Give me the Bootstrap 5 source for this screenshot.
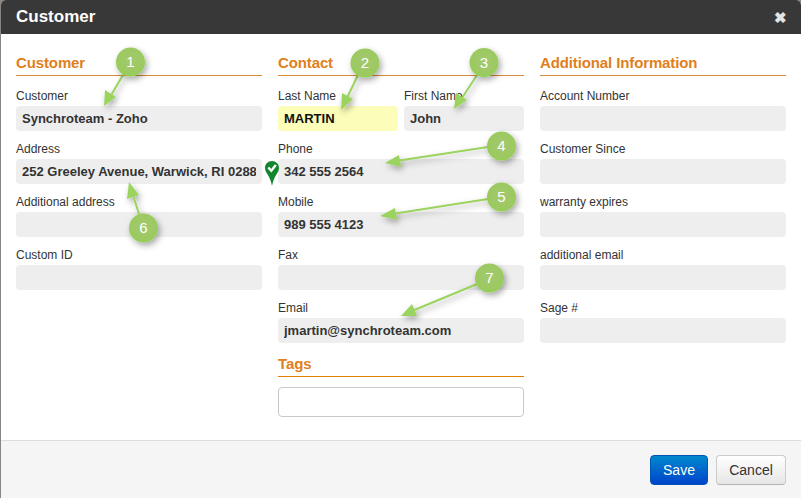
<!DOCTYPE html>
<html lang="en">
<head>
<meta charset="utf-8">
<title>Customer</title>
<link rel="stylesheet" href="https://cdn.jsdelivr.net/npm/bootstrap@5.3.0/dist/css/bootstrap.min.css">
<style>
html,body{height:498px;overflow:hidden;background:#8a8580;font-family:"Liberation Sans",Arial,sans-serif;}
.shot{position:relative;margin-left:1px;width:800px;height:498px;background:#fff;border-radius:5px 5px 0 0;overflow:hidden;}
.dlg-head{height:34px;background:#383838;color:#fff;padding:0 15px;}
.dlg-title{font-size:17px;font-weight:700;margin:0 0 2px;line-height:1;}
.dlg-x{font-size:15px;font-weight:700;color:#e4e4e4;line-height:1;margin-right:-1px;}
.dlg-body{height:406px;padding:20px 15px 0;}
.cols{grid-template-columns:repeat(3,246px);column-gap:16px;}
.sec{font-size:15px;font-weight:700;color:#e07f20;margin:0;height:22px;line-height:18px;letter-spacing:-.12px;border-bottom:1px solid #d98a3c;}
.sec-2{margin-top:11px;border-bottom-color:#e08000;height:23px;line-height:20px;}
.fld{margin-top:13px;height:42px;}
.fld+.fld{margin-top:11px;}
.fld-label{display:block;font-size:12px;line-height:14px;height:17px;margin:0;color:#333;}
.fld-in{display:block;width:100%;height:25px;border:0;border-radius:4px;background:#eee;padding:0 6px;font:700 13px/25px "Liberation Sans",Arial,sans-serif;color:#333;outline:0;}
.fld-in.hl{background:#fbfdb8;color:#111;}
.pair{grid-template-columns:120px 120px;column-gap:6px;}
.tag-in{height:30px;margin-top:10px;border:1px solid #c8c8c8;border-radius:4px;background:#fff;padding:0 6px;box-shadow:none;}
.dlg-foot{height:58px;background:#f5f5f5;border-top:1px solid #ddd;padding:0 15px;}
.bt{height:30px;padding:0;font-size:14px;line-height:28px;border-radius:4px;}
.bt-save{width:58px;color:#fff;border:1px solid #0055b3;background:linear-gradient(#0088cc,#0044cc);}
.bt-cancel{width:70px;color:#333;border:1px solid #ccc;border-bottom-color:#b3b3b3;background:linear-gradient(#fff,#e6e6e6);}
.notes{position:absolute;left:-1px;top:0;width:801px;height:498px;pointer-events:none;}
.notes text{font:400 15px "Liberation Sans",Arial,sans-serif;fill:#fff;text-anchor:middle;}
</style>
</head>
<body>
<div class="shot d-flex flex-column">
  <div class="dlg-head d-flex align-items-center justify-content-between">
    <h5 class="dlg-title">Customer</h5>
    <span class="dlg-x">✖</span>
  </div>
  <div class="dlg-body">
    <div class="d-grid cols">
      <div>
        <h6 class="sec">Customer</h6>
        <div class="fld"><label class="fld-label">Customer</label><input class="fld-in" readonly value="Synchroteam - Zoho"></div>
        <div class="fld"><label class="fld-label">Address</label><input class="fld-in" readonly value="252 Greeley Avenue, Warwick, RI 0288"></div>
        <div class="fld"><label class="fld-label">Additional address</label><input class="fld-in" readonly></div>
        <div class="fld"><label class="fld-label">Custom ID</label><input class="fld-in" readonly></div>
      </div>
      <div>
        <h6 class="sec">Contact</h6>
        <div class="fld d-grid pair">
          <div><label class="fld-label">Last Name</label><input class="fld-in hl" readonly value="MARTIN"></div>
          <div><label class="fld-label">First Name</label><input class="fld-in" readonly value="John"></div>
        </div>
        <div class="fld"><label class="fld-label">Phone</label><input class="fld-in" readonly value="342 555 2564"></div>
        <div class="fld"><label class="fld-label">Mobile</label><input class="fld-in" readonly value="989 555 4123"></div>
        <div class="fld"><label class="fld-label">Fax</label><input class="fld-in" readonly></div>
        <div class="fld"><label class="fld-label">Email</label><input class="fld-in" readonly value="jmartin@synchroteam.com"></div>
        <h6 class="sec sec-2">Tags</h6>
        <input class="fld-in tag-in" readonly>
      </div>
      <div>
        <h6 class="sec">Additional Information</h6>
        <div class="fld"><label class="fld-label">Account Number</label><input class="fld-in" readonly></div>
        <div class="fld"><label class="fld-label">Customer Since</label><input class="fld-in" readonly></div>
        <div class="fld"><label class="fld-label">warranty expires</label><input class="fld-in" readonly></div>
        <div class="fld"><label class="fld-label">additional email</label><input class="fld-in" readonly></div>
        <div class="fld"><label class="fld-label">Sage #</label><input class="fld-in" readonly></div>
      </div>
    </div>
  </div>
  <div class="dlg-foot d-flex align-items-center justify-content-end gap-2">
    <button class="btn bt bt-save" type="button">Save</button>
    <button class="btn bt bt-cancel" type="button">Cancel</button>
  </div>
  <svg class="notes" viewBox="0 0 801 498" xmlns="http://www.w3.org/2000/svg">
    <defs>
      <filter id="sh" x="-40%" y="-40%" width="190%" height="190%"><feDropShadow dx="2" dy="3" stdDeviation="3" flood-color="#000" flood-opacity=".35"/></filter>
      <radialGradient id="gb" cx=".5" cy=".45" r=".55"><stop offset="0" stop-color="#a2c96c"/><stop offset=".8" stop-color="#9cc962"/><stop offset="1" stop-color="#93d050"/></radialGradient>
    </defs>
    <g filter="url(#sh)" fill="#9bd35f" stroke="#9bd35f" stroke-width="2" stroke-linecap="round">
      <path d="M123 75 L110 97"/><path d="M104 106 L105 90 L116 97Z" stroke="none"/>
      <path d="M358 75 L346 100"/><path d="M341 110 L342 93 L353 99Z" stroke="none"/>
      <path d="M477 75 L460 101"/><path d="M454 109 L456 93 L467 100Z" stroke="none"/>
      <path d="M488 147 L396 161"/><path d="M385 163 L399 155 L401 167Z" stroke="none"/>
      <path d="M488 199 L392 214"/><path d="M380 216 L395 208 L397 220Z" stroke="none"/>
      <path d="M139 214 L132 192"/><path d="M129 182 L139 195 L127 199Z" stroke="none"/>
      <path d="M477 284 L412 311"/><path d="M401 316 L412 304 L417 316Z" stroke="none"/>
    </g>
    <g filter="url(#sh)">
      <circle cx="130.500" cy="62" r="14.500" fill="url(#gb)"/>
      <circle cx="365" cy="63" r="14.500" fill="url(#gb)"/>
      <circle cx="484" cy="62.500" r="14.500" fill="url(#gb)"/>
      <circle cx="501.500" cy="146" r="14.500" fill="url(#gb)"/>
      <circle cx="501.500" cy="197" r="14.500" fill="url(#gb)"/>
      <circle cx="143.500" cy="228" r="14.500" fill="url(#gb)"/>
      <circle cx="489.500" cy="278" r="14.500" fill="url(#gb)"/>
    </g>
    <text x="130.500" y="67">1</text>
    <text x="365" y="68">2</text>
    <text x="484" y="67.500">3</text>
    <text x="501.500" y="151">4</text>
    <text x="501.500" y="202">5</text>
    <text x="143.500" y="233">6</text>
    <text x="489.500" y="283">7</text>
    <path d="M272 161 C268 161 265 164 265 168 C265 173 270 175 272 186 C274 175 279 173 279 168 C279 164 276 161 272 161Z" fill="#14852f"/>
    <path d="M268.300 167.500 L271.300 170.700 L275.800 165" fill="none" stroke="#fff" stroke-width="2.300"/>
  </svg>
</div>
<script src="https://cdn.jsdelivr.net/npm/bootstrap@5.3.0/dist/js/bootstrap.bundle.min.js"></script>
</body>
</html>
